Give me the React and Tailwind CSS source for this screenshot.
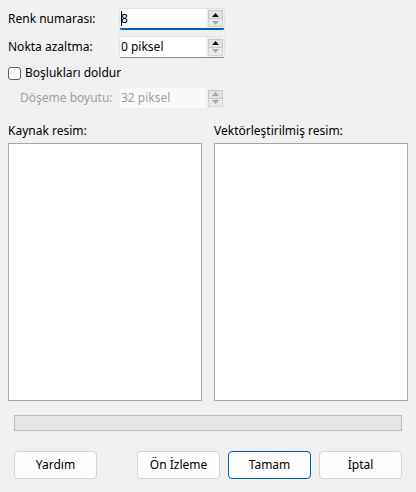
import React from "react";

function Spin({ disabled }) {
  return (
    <div className="flex w-[18px] flex-col items-center justify-center self-stretch bg-[#f0f0f0] pl-[1px]">
      <div className="flex h-[9px] w-[15px] items-center justify-center border border-[#c8c8c8] bg-[#e3e3e3]">
        <svg width="7" height="4" viewBox="0 0 7 4">
          <path d="M0 4 L3.5 0 L7 4 Z" fill={disabled ? "#a8a8a8" : "#111"} />
        </svg>
      </div>
      <div className="flex h-[8px] w-[15px] items-center justify-center border border-t-0 border-[#d4d4d4] bg-[#eaeaea]">
        <svg width="7" height="4" viewBox="0 0 7 4">
          <path d="M0 0 L3.5 4 L7 0 Z" fill="#a8a8a8" />
        </svg>
      </div>
    </div>
  );
}

function SpinBox({ value, focused, disabled, caret }) {
  return (
    <div
      className={`flex h-[22px] w-[106px] overflow-hidden rounded-[3px] border border-[#e2e2e2] ${
        focused
          ? "border-b-2 border-b-[#005fb8]"
          : disabled
          ? "h-[21px] border-[#ececec] bg-[#f9f9f9]"
          : "border-b-[#8a8a8a]"
      }`}
    >
      <div
        className={`flex flex-1 items-center pl-[1px] ${
          disabled ? "bg-[#f9f9f9] text-[#a0a0a0]" : "bg-white text-black"
        }`}
      >
        {caret && <span className="mr-[-1px] h-[15px] w-[1px] bg-black" />}
        <span>{value}</span>
      </div>
      <Spin disabled={disabled} />
    </div>
  );
}

function Button({ children, primary }) {
  return (
    <button
      className={`h-[28px] w-[83px] rounded-[4px] bg-[#fdfdfd] text-black ${
        primary ? "border border-[#005fb8]" : "border border-[#d3d3d3]"
      }`}
    >
      {children}
    </button>
  );
}

export default function App() {
  return (
    <div
      className="flex h-[492px] w-[416px] flex-col bg-[#f0f0f0] text-[12px] text-black"
      style={{ fontFamily: '"Noto Sans", "Open Sans", sans-serif' }}
    >
      {/* Settings */}
      <div className="flex flex-col pt-[8px]">
        <div className="flex items-center">
          <span className="w-[119px] pl-[8px]">Renk numarası:</span>
          <SpinBox value="8" focused caret />
        </div>
        <div className="mt-[6px] flex items-center">
          <span className="w-[119px] pl-[8px]">Nokta azaltma:</span>
          <SpinBox value="0 piksel" />
        </div>
        <label className="mt-[7px] flex h-[16px] items-center pl-[8px]">
          <span className="h-[13px] w-[13px] rounded-[3px] border border-[#5f5f5f] bg-[#fbfbfb]" />
          <span className="ml-[4px]">Boşlukları doldur</span>
        </label>
        <div className="mt-[6px] flex items-center">
          <span className="w-[119px] pl-[20px] text-[#a0a0a0]">Döşeme boyutu:</span>
          <SpinBox value="32 piksel" disabled />
        </div>
      </div>

      {/* Images */}
      <div className="mt-[14px] grid grid-cols-2 gap-[12px] px-[8px]">
        <div className="flex flex-col">
          <span className="h-[20px] leading-[16px]">Kaynak resim:</span>
          <div className="h-[258px] border border-[#a8a8a8] bg-white" />
        </div>
        <div className="flex flex-col">
          <span className="h-[20px] leading-[16px]">Vektörleştirilmiş resim:</span>
          <div className="h-[258px] border border-[#a8a8a8] bg-white" />
        </div>
      </div>

      {/* Progress */}
      <div className="mx-[14px] mt-[14px] h-[16px] border border-[#bcbcbc] bg-[#e6e6e6]" />

      {/* Buttons */}
      <div className="mt-[20px] flex px-[14px]">
        <Button>Yardım</Button>
        <div className="flex-1" />
        <div className="flex gap-[8px]">
          <Button>Ön İzleme</Button>
          <Button primary>Tamam</Button>
          <Button>İptal</Button>
        </div>
      </div>
    </div>
  );
}
